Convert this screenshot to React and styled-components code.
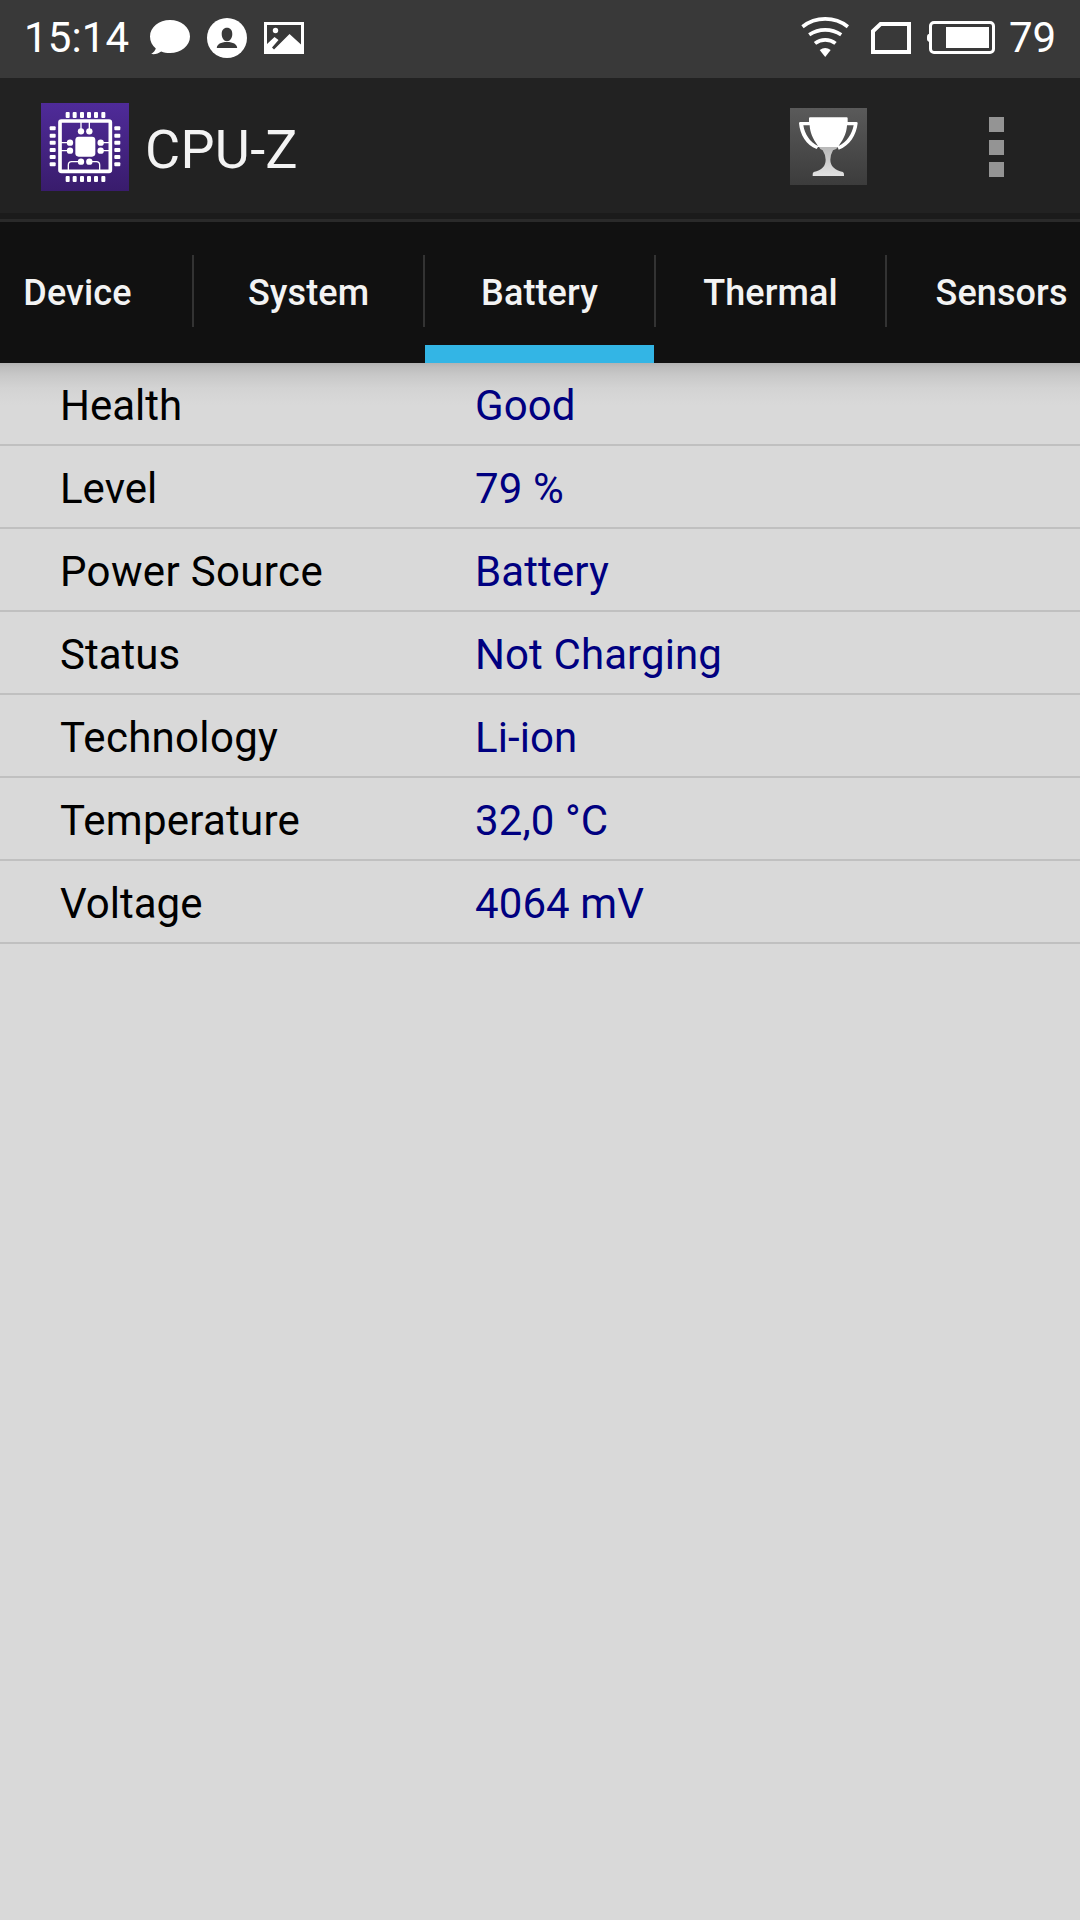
import React from 'react'
import styled, {createGlobalStyle} from 'styled-components'

const tabs = ['Device', 'System', 'Battery', 'Thermal', 'Sensors']

const batteryInfo = [
  {label: 'Health', value: 'Good'},
  {label: 'Level', value: '79 %'},
  {label: 'Power Source', value: 'Battery', tracking: 0.35},
  {label: 'Status', value: 'Not Charging'},
  {label: 'Technology', value: 'Li-ion', tracking: 0.3},
  {label: 'Temperature', value: '32,0 °C', tracking: 0.25},
  {label: 'Voltage', value: '4064 mV'},
]

const ChatIcon = () => (
  <svg width="40" height="35" viewBox="0 0 40 35" fill="#fff">
    <path d="M20 0C31 0 40 7.200 40 16.500S31 33 20 33c-3.300 0-6.200-.5-8.800-1.500C8.500 33.500 5 34.600 1.200 34c2.300-1.500 4-3.300 4.600-5.400C2.200 25.600 0 21.300 0 16.500 0 7.200 9 0 20 0z" />
  </svg>
)

const PersonIcon = () => (
  <svg width="40" height="40" viewBox="0 0 40 40">
    <circle cx="20" cy="20" r="20" fill="#fff" />
    <path
      d="M20 9.800c3.300 0 5.300 2.300 5.300 6.200 0 4-2.100 7.200-5.300 7.200s-5.300-3.200-5.300-7.200c0-3.900 2-6.200 5.300-6.200zM9.800 30c.2-3.600 4-5.900 10.200-5.900S30 26.400 30.200 30z"
      fill="#393939"
    />
  </svg>
)

const PictureIcon = () => (
  <svg width="40" height="32" viewBox="0 0 40 32">
    <path fill="#fff" fillRule="evenodd" d="M0 0h40v32H0zM3 3v19l7.500-7 4 3-6.500 7.500 2 2L25.500 12 37 22.500V3z" />
    <circle cx="11.500" cy="8.500" r="2.700" fill="#fff" />
  </svg>
)

const WifiIcon = () => (
  <svg width="48" height="41" viewBox="0 0 48 41">
    <g fill="none" stroke="#fff" strokeWidth="3.700">
      <path d="M1.500 9.700a37 37 0 0 1 45.400 0" />
      <path d="M8.200 17.700a29 29 0 0 1 32 0" />
      <path d="M14 26.400a16.500 16.500 0 0 1 20.500 0" />
    </g>
    <path d="M18.700 33q5.500-4 11 0l-5.500 7z" fill="#fff" />
  </svg>
)

const SimIcon = () => (
  <svg width="40" height="32" viewBox="0 0 40 32">
    <path
      d="M9.600 2H38v28H2V9.200z"
      fill="none"
      stroke="#fff"
      strokeWidth="4"
    />
  </svg>
)

const BatteryIcon = () => (
  <svg width="68" height="33" viewBox="0 0 68 33">
    <rect x="3.500" y="1.500" width="63" height="30" rx="3.500" fill="none" stroke="#fff" strokeWidth="3" />
    <path d="M3 12.500q-3 .5-3 3v2.500q0 2.500 3 3z" fill="#fff" />
    <path d="M19 6h43v21H19z" fill="#fff" />
  </svg>
)

const topPins = [80, 101, 123, 144, 165, 187]
const sidePins = [76, 98, 119, 141, 162, 184]

const ChipIcon = () => (
  <svg width="88" height="88" viewBox="0 0 264 264">
    <defs>
      <linearGradient id="chipBg" x1="0" y1="0" x2="0" y2="1">
        <stop offset="0" stopColor="#4f2b99" />
        <stop offset="1" stopColor="#391c6c" />
      </linearGradient>
    </defs>
    <path fill="url(#chipBg)" d="M0 0h264v264H0z" />
    <g fill="#fff">
      {topPins.map(x => (
        <React.Fragment key={x}>
          <rect x={x - 6} y="27" width="12" height="18" rx="3" />
          <rect x={x - 6} y="219" width="12" height="18" rx="3" />
        </React.Fragment>
      ))}
      {sidePins.map(y => (
        <React.Fragment key={y}>
          <rect x="26" y={y - 6} width="18" height="12" rx="3" />
          <rect x="220" y={y - 6} width="18" height="12" rx="3" />
        </React.Fragment>
      ))}
      <rect x="103" y="101" width="60" height="60" rx="10" />
      <circle cx="120" cy="85" r="9.500" />
      <circle cx="145" cy="85" r="9.500" />
      <circle cx="87" cy="119" r="9.500" />
      <circle cx="87" cy="143" r="9.500" />
      <circle cx="179" cy="119" r="9.500" />
      <circle cx="179" cy="143" r="9.500" />
      <circle cx="120" cy="176" r="9.500" />
      <circle cx="145" cy="176" r="9.500" />
    </g>
    <g fill="none" stroke="#fff">
      <rect x="57" y="54" width="151" height="151" rx="4" strokeWidth="11" />
      <path
        d="M120 85V54M145 85V54M87 119H57M87 143H57M179 119h29M179 143h29M120 176H92q-10 0-10 10v19M145 176h21q10 0 10 10v19"
        strokeWidth="4"
      />
    </g>
  </svg>
)

const TrophyIcon = () => (
  <svg width="77" height="77" viewBox="0 0 231 231">
    <defs>
      <linearGradient id="trophyBg" x1="0" y1="0" x2="0" y2="1">
        <stop offset="0" stopColor="#5a5a5a" />
        <stop offset="1" stopColor="#3c3c3c" />
      </linearGradient>
      <linearGradient id="trophyStem" x1="0" y1="0" x2="0" y2="1">
        <stop offset="0" stopColor="#b8b8b8" />
        <stop offset="1" stopColor="#e2e2e2" />
      </linearGradient>
    </defs>
    <path fill="url(#trophyBg)" d="M0 0h231v231H0z" />
    <path
      d="M87 117h57q-5 8-15 10-8 14-8 28c0 19 13 31 38 37q4 3 3 12H68q-1-9 3-12c25-6 36-18 36-37q0-14-9-28-8-2-11-10z"
      fill="url(#trophyStem)"
    />
    <path
      d="M60 28h110q3 0 3 3v11h26q4 0 4 4c-4 35-24 68-57 79l-3-8H84l-4 6C49 113 30 80 27 46q0-4 4-4h26V31q0-3 3-3zM40 52c4 25 19 51 44 62C67 91 60 72 59 52zM191 52h-20c-1 20-8 39-25 62 25-11 40-37 45-62z"
      fill="#fff"
      fillRule="evenodd"
    />
  </svg>
)

const App = () => {
  const [activeTab, setActiveTab] = React.useState('Battery')

  return (
    <Screen>
      <GlobalStyle />
      <StatusBar>
        <Clock>15:14</Clock>
        <Notifications>
          <ChatIcon />
          <PersonIcon />
          <PictureIcon />
        </Notifications>
        <SystemIcons>
          <WifiIcon />
          <SimIcon />
          <BatteryIcon />
        </SystemIcons>
        <BatteryLevel>79</BatteryLevel>
      </StatusBar>
      <ActionBar>
        <ChipIcon />
        <AppTitle>CPU-Z</AppTitle>
        <TrophyButton aria-label="Validate">
          <TrophyIcon />
        </TrophyButton>
        <MenuButton aria-label="More options">
          <MenuDot />
          <MenuDot />
          <MenuDot />
        </MenuButton>
      </ActionBar>
      <TabStrip>
        {tabs.map((tab, i) => (
          <React.Fragment key={tab}>
            {i > 0 && <TabDivider />}
            <Tab active={tab === activeTab} onClick={() => setActiveTab(tab)}>
              {tab}
            </Tab>
          </React.Fragment>
        ))}
      </TabStrip>
      <InfoList>
        {batteryInfo.map(({label, value, tracking}) => (
          <InfoRow key={label}>
            <InfoLabel $tracking={tracking}>{label}</InfoLabel>
            <InfoValue>{value}</InfoValue>
          </InfoRow>
        ))}
      </InfoList>
    </Screen>
  )
}

const GlobalStyle = createGlobalStyle`
  * {
    box-sizing: border-box;
  }

  body {
    margin: 0;
    font-family: Roboto, sans-serif;
    background: #d9d9d9;
  }

  svg {
    display: block;
    flex: none;
  }
`

const Screen = styled.div`
  display: flex;
  flex-direction: column;
  width: 1080px;
  height: 1920px;
  overflow: hidden;
`

const StatusBar = styled.header`
  display: flex;
  align-items: center;
  height: 78px;
  padding: 0 24px 3px;
  background: #393939;
  color: #fff;
  font-size: 42px;
`

const Clock = styled.span`
  width: 126px;
  margin-bottom: 1px;
  letter-spacing: 0.1px;
`

const Notifications = styled.div`
  display: flex;
  align-items: center;
  gap: 17px;
`

const SystemIcons = styled.div`
  display: flex;
  align-items: center;
  gap: 19px;
  margin-left: auto;

  svg:first-child {
    margin-right: 3px;
  }

  svg:last-child {
    margin-left: -3px;
  }
`

const BatteryLevel = styled.span`
  width: 47px;
  margin: 0 0 1px 14px;
`

const ActionBar = styled.div`
  display: flex;
  align-items: center;
  height: 144px;
  padding: 0 76px 3px 41px;
  background: #222;
  border-bottom: 3px solid #2a2a2a;
  box-shadow: inset 0 -6px #1b1b1b;
`

const AppTitle = styled.h1`
  margin: 5px 0 0 16px;
  color: #f3f3f3;
  font-size: 54px;
  font-weight: 400;
  letter-spacing: 0.3px;
`

const TrophyButton = styled.button`
  margin: 0 0 1px auto;
  padding: 0;
  border: 0;
  background: none;
`

const MenuButton = styled.button`
  display: flex;
  flex-direction: column;
  gap: 7.500px;
  margin-left: 122px;
  padding: 0;
  border: 0;
  background: none;
`

const MenuDot = styled.span`
  width: 15px;
  height: 15px;
  background: #949494;
`

const TabStrip = styled.nav`
  display: flex;
  flex: none;
  height: 141px;
  margin-left: -37px;
  background: #111;
`

const Tab = styled.button.withConfig({
  shouldForwardProp: prop => prop !== 'active',
})`
  flex: 0 0 229px;
  padding: 18px 0 0;
  border: 0;
  border-bottom: 18px solid ${props => (props.active ? '#33b5e5' : 'transparent')};
  background: none;
  color: #f3f3f3;
  font-family: inherit;
  font-size: 36px;
  font-weight: 500;
  letter-spacing: 0.1px;
`

const TabDivider = styled.span`
  flex: 0 0 2px;
  height: 72px;
  margin-top: 33px;
  background: #333;
`

const InfoList = styled.main`
  flex: 1;
  background: #d9d9d9
    linear-gradient(#b3b3b3, #bdbdbd 4px, #c9c9c9 13px, #d3d3d3 25px, #d9d9d9 42px)
    no-repeat;
`

const InfoRow = styled.div`
  display: flex;
  align-items: center;
  height: 83px;
  padding: 4px 0 0 60px;
  border-bottom: 2px solid #c0c0c0;
  font-size: 42px;
`

const InfoLabel = styled.span`
  width: 415px;
  color: #000;
  letter-spacing: ${props => props.$tracking || 0}px;
`

const InfoValue = styled.span`
  color: #000080;
  letter-spacing: 0.1px;
`

export default App
